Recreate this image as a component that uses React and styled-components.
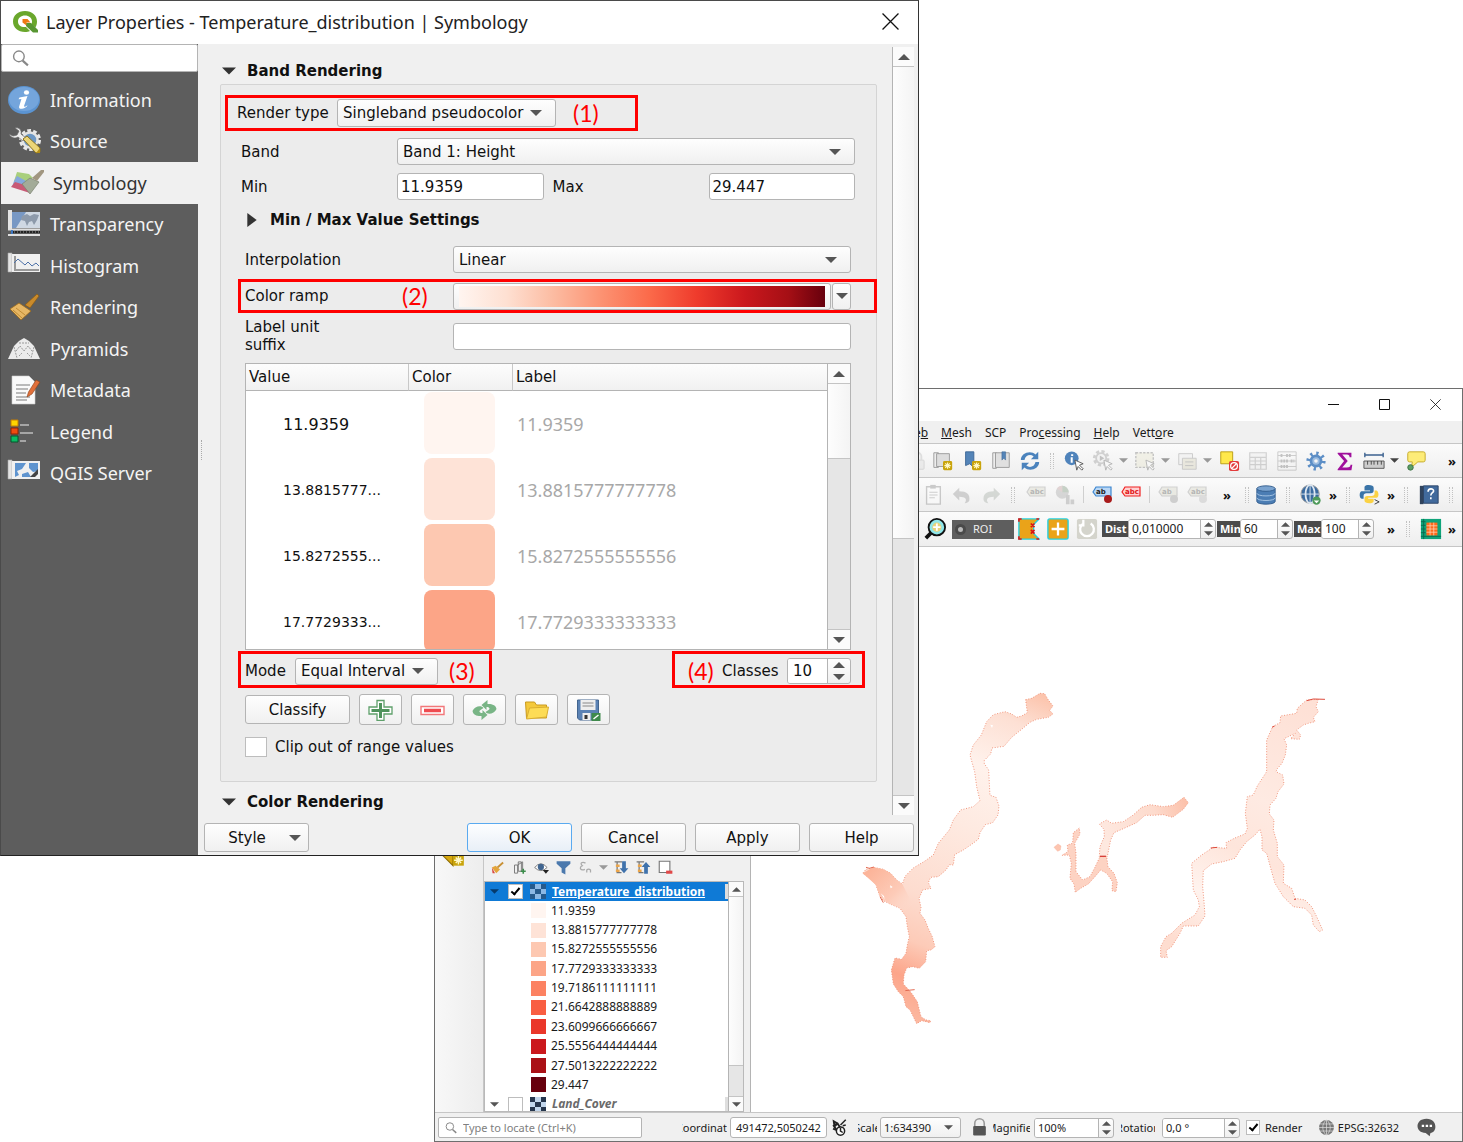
import React from "react";
import styled, { createGlobalStyle, css } from "styled-components";

const UI = '"Noto Sans", "Open Sans", sans-serif';
const FORM = '"DejaVu Sans", "Noto Sans", sans-serif';
const LINE = "#b4b4b4";
const RED = "#ff0000";

const Global = createGlobalStyle`
  *, *::before, *::after { box-sizing: border-box; }
  body { margin: 0; background: #fff; font-family: ${UI}; color: #1a1a1a; }
  button, input, select { font: inherit; color: inherit; margin: 0; }
  ul { list-style: none; margin: 0; padding: 0; }
  svg { display: block; flex: none; }
`;

const Desktop = styled.div`
  position: relative;
  min-height: 100vh;
  overflow: hidden;
`;

/* ---------- shared controls ---------- */

const face = css`
  background: linear-gradient(#fefefe, #f0f0f0);
  border: 1px solid ${LINE};
  border-radius: 3px;
`;

const PlainButton = styled.button`
  border: 0;
  padding: 0;
  background: none;
  display: flex;
  align-items: center;
  justify-content: center;
`;

const Triangle = ({ dir = "down", size = 12, color = "#555" }) => {
  const shape = {
    down: "M0 3h12L6 9z",
    up: "M0 9h12L6 3z",
    right: "M2 0v12l8-6z",
  }[dir];
  return (
    <svg width={size} height={size} viewBox="0 0 12 12" aria-hidden="true">
      <path d={shape} fill={color} />
    </svg>
  );
};

const SelectShell = styled.span`
  display: grid;
  grid-template-columns: 1fr auto;
  align-items: center;
  height: ${(p) => p.$h || 27}px;
  width: ${(p) => (p.$w ? `${p.$w}px` : "auto")};
  flex: ${(p) => (p.$w ? "none" : 1)};
  ${face}
  select {
    grid-area: 1 / 1 / 2 / 3;
    appearance: none;
    border: 0;
    background: none;
    width: 100%;
    height: 100%;
    padding: 0 0 0 ${(p) => p.$pad ?? 5}px;
  }
  svg {
    grid-area: 1 / 2 / 2 / 3;
    margin-right: ${(p) => p.$arrow ?? 13}px;
    pointer-events: none;
  }
`;

const Select = ({ id, value, size, ...rest }) => (
  <SelectShell {...rest}>
    <select id={id} defaultValue={value}>
      <option>{value}</option>
    </select>
    <Triangle size={size} />
  </SelectShell>
);

const TextInput = styled.input`
  flex: 1;
  min-width: 0;
  width: 100%;
  height: 27px;
  padding: 0 3px;
  background: #fff;
  border: 1px solid ${LINE};
  border-radius: 3px;
`;

const SpinShell = styled.span`
  display: flex;
  width: ${(p) => p.$w}px;
  height: ${(p) => p.$h || 20}px;
  overflow: hidden;
  ${face}
  input {
    flex: 1;
    min-width: 0;
    border: 0;
    border-right: 1px solid ${LINE};
    background: #fff;
    padding: 0 0 0 ${(p) => p.$pad || 3}px;
  }
`;

const SpinArrows = styled.span`
  display: flex;
  flex-direction: column;
  align-items: center;
  justify-content: center;
  width: ${(p) => p.$w || 14}px;
`;

const Spin = ({ id, value, arrows, size = 9, ...rest }) => (
  <SpinShell {...rest}>
    <input id={id} defaultValue={value} />
    <SpinArrows $w={arrows}>
      <Triangle dir="up" size={size} />
      <Triangle size={size} />
    </SpinArrows>
  </SpinShell>
);

const Bar = styled.div`
  display: flex;
  flex-direction: column;
  width: ${(p) => p.$w}px;
  background: #e6e6e6;
  border-left: 1px solid ${LINE};
  flex: none;
`;
const BarEnd = styled(PlainButton)`
  height: ${(p) => p.$h}px;
  flex: none;
  background: #fbfbfb;
  border-${(p) => (p.$end ? "top" : "bottom")}: 1px solid #c4c4c4;
`;
const Thumb = styled.div`
  flex: ${(p) => p.$grow} 1 0;
  background: linear-gradient(90deg, #fdfdfd, #f4f4f4);
  border-bottom: 1px solid #c4c4c4;
`;
const Rest = styled.div`
  flex: ${(p) => p.$grow} 1 0;
`;

const ScrollBar = ({ w, h, size, thumb, rest }) => (
  <Bar $w={w}>
    <BarEnd $h={h} aria-label="Scroll up"><Triangle dir="up" size={size} /></BarEnd>
    <Thumb $grow={thumb} />
    <Rest $grow={rest} />
    <BarEnd $h={h} $end aria-label="Scroll down"><Triangle size={size} /></BarEnd>
  </Bar>
);

/* ---------- layer properties dialog ---------- */

const Dialog = styled.section`
  position: absolute;
  left: 0;
  top: 0;
  width: 919px;
  display: flex;
  flex-direction: column;
  background: #f0f0f0;
  border: 1px solid #4a4a4a;
  border-right-color: #333;
  border-bottom-color: #222;
  font-family: ${FORM};
  font-size: 15px;
  color: #111;
`;

const DialogTitle = styled.header`
  display: flex;
  align-items: center;
  height: 43px;
  padding: 0 19px 2px 11px;
  gap: 7px;
  background: #fff;
  h1 {
    flex: 1;
    margin: 0;
    font: 400 18px/24px ${UI};
    color: #222;
  }
`;

const DialogMain = styled.div`
  display: flex;
  height: 811px;
`;

const Sidebar = styled.nav`
  width: 197px;
  flex: none;
  background: #5d5d5d;
`;

const SideSearch = styled.label`
  display: flex;
  align-items: center;
  height: 28px;
  padding-left: 10px;
  background: #fff;
  border: 1px solid ${LINE};
  border-radius: 2px;
  input {
    flex: 1;
    min-width: 0;
    border: 0;
    outline: 0;
    background: none;
  }
`;

const SideList = styled.ul`
  display: grid;
  grid-auto-rows: 1fr;
  height: 415px;
  margin-top: 7px;
`;

const SideItem = styled.a`
  display: flex;
  align-items: center;
  gap: 9px;
  height: 100%;
  padding-left: ${(p) => (p.$active ? 9 : 6)}px;
  font: 400 18px/24px ${UI};
  text-decoration: none;
  color: ${(p) => (p.$active ? "#333" : "#f4f4f4")};
  background: ${(p) => (p.$active ? "#f0f0f0" : "none")};
`;

const Splitter = styled.div`
  width: 6px;
  flex: none;
  display: flex;
  align-items: center;
  justify-content: center;
  &::after {
    content: "";
    height: 20px;
    border-left: 1px dotted #aaa;
  }
`;

const Content = styled.div`
  flex: 1;
  min-width: 0;
  display: flex;
  flex-direction: column;
`;

const ScrollArea = styled.div`
  display: flex;
  height: 771px;
  padding: 3px 4px 0 0;
`;

const Form = styled.div`
  flex: 1;
  min-width: 0;
  padding: 11px 15px 0 16px;
`;

const SectionTitle = styled.h2`
  display: flex;
  align-items: center;
  gap: 11px;
  height: 26px;
  margin: ${(p) => p.$top || 0}px 0 0 ${(p) => p.$left || 2}px;
  font-size: 15px;
  line-height: 20px;
  font-weight: 700;
`;

const Group = styled.div`
  height: 698px;
  border: 1px solid #d4d4d4;
  border-radius: 2px;
  background: #ececec;
`;

const Row = styled.div`
  display: flex;
  align-items: center;
  margin: ${(p) => p.$top || 8}px ${(p) => p.$right ?? 25}px 0 ${(p) => p.$left ?? 24}px;
  gap: ${(p) => p.$gap || 0}px;
`;

const PairRow = styled.div`
  display: grid;
  grid-template-columns: 156px 1fr 165px 1fr;
  align-items: center;
  margin: 8px 21px 0 20px;
  label + input + label { padding-left: 9px; }
`;

const Label = styled.label`
  width: ${(p) => p.$w}px;
  flex: none;
  line-height: 18px;
`;
const Narrow = styled.span`
  display: block;
  width: 90px;
`;

const Callout = styled.div`
  display: flex;
  align-items: center;
  height: ${(p) => p.$h}px;
  width: ${(p) => (p.$w ? `${p.$w}px` : "auto")};
  padding: ${(p) => p.$pt || 0}px ${(p) => p.$pr || 0}px 0 ${(p) => p.$pl}px;
  margin: ${(p) => p.$m || "0"};
  border: 3px solid ${RED};
`;

const Mark = styled.span`
  width: ${(p) => p.$w || 34}px;
  margin-left: ${(p) => p.$left || 0}px;
  flex: none;
  font: 400 23px/26px Lato, ${UI};
  color: ${RED};
`;

const RampButton = styled.button`
  flex: 1;
  height: 27px;
  padding: 2px 5px;
  ${face}
`;
const Ramp = styled.span`
  display: block;
  height: 100%;
  background: linear-gradient(90deg, #fff5f0, #fee0d2 13%, #fcbba1 26%, #fc9272 39%, #fb6a4a 52%, #ef3b2c 65%, #cb181d 78%, #a50f15 90%, #67000d);
`;
const DropButton = styled(PlainButton)`
  width: 19px;
  height: 27px;
  margin-left: 1px;
  ${face}
`;

const TableFrame = styled.div`
  display: flex;
  height: 287px;
  margin: 9px 25px 0 24px;
  overflow: hidden;
  background: #fff;
  border: 1px solid ${LINE};
`;
const TableView = styled.div`
  flex: 1;
  min-width: 0;
  overflow: hidden;
`;
const ClassTable = styled.table`
  width: 100%;
  table-layout: fixed;
  border-collapse: separate;
  border-spacing: 0;
  th {
    height: 27px;
    padding: 0 3px;
    text-align: left;
    font-weight: 400;
    background: linear-gradient(#fdfdfd, #f1f1f1);
    border-bottom: 1px solid ${LINE};
  }
  th + th { border-left: 1px solid #c8c8c8; }
  td { height: 66px; padding: 0; }
`;
const ValueCell = styled.td`
  && { padding-left: 37px; }
  font-size: ${(p) => (p.$lead ? 16 : 14)}px;
`;
const LabelCell = styled.td`
  && { padding-left: 5px; }
  font: 400 18px/24px ${UI};
  color: #a8a8a8;
`;
const Swatch = styled.span`
  display: block;
  width: 71px;
  height: 62px;
  margin: 0 0 2px 16px;
  border-radius: 8px;
  background: ${(p) => p.$c};
`;

const ModeRow = styled.div`
  display: flex;
  justify-content: space-between;
  margin: 1px 11px 0 17px;
`;

const PushButton = styled.button`
  width: 105px;
  height: 29px;
  padding: 0;
  ${face}
  ${(p) => p.$primary && "border-color: #5aaaf0; background: linear-gradient(#fdfeff, #e8eff7);"}
`;
const StyleButton = styled(PushButton)`
  display: grid;
  grid-template-columns: 84px 1fr;
  align-items: center;
`;
const IconButton = styled(PlainButton)`
  width: 43px;
  height: 31px;
  ${face}
`;

const CheckBox = styled.input`
  appearance: none;
  width: ${(p) => p.$w}px;
  height: ${(p) => p.$h}px;
  flex: none;
  background: #fff;
  border: 1px solid #bdbdbd;
  display: grid;
  place-items: center;
  &:checked::after {
    content: "";
    width: 5px;
    height: 9px;
    margin-bottom: 2px;
    border: solid #000;
    border-width: 0 2px 2px 0;
    transform: rotate(40deg);
  }
`;

const Footer = styled.footer`
  display: flex;
  align-items: flex-end;
  gap: 9px;
  height: 40px;
  padding: 0 4px 3px 0;
`;
const Fill = styled.span`
  flex: 1;
`;

/* ---------- icons: dialog ---------- */

const Logo = () => (
  <svg width="27" height="24" viewBox="0 0 27 24" aria-hidden="true">
    <path d="M13 1C6 1 1 5.500 1 11.500S6 22 13 22c2 0 3.500-.3 5-1l-4-4c-5 .6-8-2-8-5.500C6 8 9 5.500 13 5.500S20 8 20 11.500c0 1-.2 2-.7 2.700l4 3.300c1.200-1.700 1.700-3.800 1.700-6C25 5.500 20 1 13 1z" fill="#6aa72c" />
    <path d="M14 13h5l7 7v2.500h-5L14 16z" fill="#589632" />
    <path d="M10.500 9h5l3 3.500h-4v3l-4-3z" fill="#ee7913" />
  </svg>
);

const Magnifier = ({ size = 17, color = "#888" }) => (
  <svg width={size} height={size} viewBox="0 0 16 16" fill="none" stroke={color} strokeWidth="1.300" aria-hidden="true">
    <circle cx="6.500" cy="6" r="5" />
    <path d="M10 10l5 4.500" strokeWidth="2" />
  </svg>
);

const Close = ({ size = 16 }) => (
  <svg width={size} height={size} viewBox="0 0 16 16" stroke="#111" strokeWidth="1.200" aria-hidden="true">
    <path d="M0.500 0.500l15 15M15.500 0.500l-15 15" />
  </svg>
);

const scrollMap = (
  <>
    <path d="M1 2h4v19H1z" fill="#e4e4e4" stroke="#aaa" strokeWidth=".6" />
    <path d="M5 3h28v18H5z" fill="#f0f0f0" />
  </>
);

const sideArt = {
  Information: (
    <>
      <ellipse cx="17" cy="15" rx="16" ry="14" fill="#5b94d2" />
      <ellipse cx="17" cy="14" rx="15" ry="12" fill="#74a5dc" />
      <ellipse cx="19.500" cy="7.500" rx="2.600" ry="2.200" fill="#fff" />
      <path d="M12.500 12.500l8-1.500-3.500 10c0 1.500 2 .4 3.500-.8-1 3-8.500 5.500-8.500 1.800l2.400-8-2.900.3z" fill="#fff" />
    </>
  ),
  Source: (
    <>
      <circle cx="23" cy="14" r="9" fill="none" stroke="#e8e8e8" strokeWidth="4" strokeDasharray="3.500 2.150" />
      <circle cx="23" cy="14" r="7.500" fill="#6d97c4" stroke="#e4e4e4" strokeWidth="2.500" />
      <path d="M2 8c2 4 6 5 9 3l5 4 3-3-5-4c1-4-2-7-6-6l4 3-2 4-4 1z" fill="#eee" stroke="#666" strokeWidth=".7" />
      <path d="M16 13l4-3 13 12v4l-4 1z" fill="#ecd577" stroke="#8c7420" />
      <path d="M29 27l4-5v5z" fill="#b28d18" />
    </>
  ),
  Symbology: (
    <>
      <path d="M7 4l12 2 4 4-9 4-10-1z" fill="#a9cf7c" />
      <path d="M4 13l3-5 9 5-2 5-12 1z" fill="#86a8dc" />
      <path d="M1 19l4-5 10 3 5 8z" fill="#c95a76" />
      <path d="M12 16l8-6 9 4-9 12z" fill="#a3ab98" stroke="#7a8270" strokeWidth=".7" />
      <path d="M22 10l9-8h3v2l-7 9z" fill="#a19680" />
    </>
  ),
  Transparency: (
    <>
      <path d="M1 1h4v19H1z" fill="#e4e4e4" />
      <path d="M5 3h28v16H5z" fill="#cfd8e3" />
      <path d="M5 3h14L9 19H5z" fill="#6288bc" opacity=".8" />
      <path d="M15 7l5-2 3 2 4-2 5 1-2 5-3 5-2-4-3 1-2 4-2-5-4-1z" fill="#8d9aab" />
      <path d="M1 20.500h32M1 26h32" stroke="#e0e0e0" strokeWidth="1.800" />
      <path d="M5 23h28" stroke="#222" strokeDasharray="2 1" strokeWidth="2" />
      <path d="M4 21h2v4H4z" fill="#3d76c0" />
    </>
  ),
  Histogram: (
    <>
      {scrollMap}
      <path d="M8 5v14h24" fill="none" stroke="#999" strokeWidth="2" />
      <path d="M7 12l4-4 7 6 3-3 4 4 4-3 3 3" fill="none" stroke="#4d71a8" />
    </>
  ),
  Rendering: (
    <>
      <path d="M18 13L30 2l2 2-9 12z" fill="#c98a2b" stroke="#8a5a12" strokeWidth=".7" />
      <path d="M3 17l9-6 12 8-10 9z" fill="#e7b765" stroke="#9a6a1c" strokeWidth=".8" />
      <path d="M6 18l9 8M9 16l9 7" stroke="#c08c36" />
    </>
  ),
  Pyramids: (
    <>
      <path d="M7 12l5-5 5-3 5 3 5 5 6 13H1z" fill="#ebebeb" />
      <path d="M7 13l3 11M27 13l-3 11M12 9h10M9 17l4-5 4 5 4-5 4 5M12 22l3-3M20 19l3 3" fill="none" stroke="#999" strokeDasharray="2 1" />
    </>
  ),
  Metadata: (
    <>
      <path d="M5 1h17l6 6v22H5z" fill="#fafafa" stroke="#ccc" strokeWidth=".6" />
      <path d="M9 10h14M9 14h12M9 18h10M9 22h14M9 25h11" stroke="#a5a5a5" strokeWidth="1.300" />
      <path d="M20 22l1.500-5L29 5l4 2-8 12z" fill="#e2703a" stroke="#8a3f16" strokeWidth=".6" />
    </>
  ),
  Legend: (
    <>
      <path d="M4 3h7v6H4z" fill="#ffd500" stroke="#c87f00" />
      <path d="M4 11h7v6H4z" fill="#f04a10" stroke="#8c2300" />
      <path d="M4 19h7v6H4z" fill="#0bbb63" stroke="#04562c" />
      <path d="M13 8h9M13 16h13M13 24h6" stroke="#a5a5a5" strokeWidth="2" />
    </>
  ),
  "QGIS Server": (
    <>
      {scrollMap}
      <path d="M8 5h11l-4 6-5 2 2 4-4 2zM22 5h9v8l-5 1-4-4zM15 16l6-2 3 5h-9z" fill="#5f94cf" />
      <path d="M31 11l-8 8h5l3-3z" fill="#444" />
    </>
  ),
};

const SideIcon = ({ name }) => (
  <svg width="34" height="30" viewBox="0 0 34 30" aria-hidden="true">{sideArt[name]}</svg>
);

const rampTools = [
  ["Add value", (
    <>
      <path d="M8.500.5h7v6.500h8v7h-8v6.500h-7V14h-8V7h8z" fill="#fff" stroke="#5fa06b" strokeWidth="1.300" />
      <path d="M12 3v15M3 10.500h18" stroke="#4f935c" strokeWidth="3" />
    </>
  )],
  ["Remove value", (
    <>
      <path d="M.5 6.500h23v8H.5z" fill="#fff" stroke="#f2777a" strokeWidth="1.400" />
      <path d="M3.500 10.500h17" stroke="#ef4b50" strokeWidth="3.500" />
    </>
  )],
  ["Invert", (
    <>
      <path d="M11 8c-2-3-9-2-11 3 1 5 6 5 9 5v4l6-5-5-5v3c-3 0-4-2-2-3z" fill="#79b586" />
      <path d="M13 12c2 3 9 2 11-3-1-5-6-5-9-5V0l-6 5 5 5V7c3 0 4 2 2 3z" fill="#79b586" />
    </>
  )],
  ["Load", (
    <>
      <path d="M1 2h9l2 3h10v13H2z" fill="#f4c93c" stroke="#c99a1e" />
      <path d="M5 8l19-1-2 10-20 2z" fill="#fddc56" stroke="#d9ae32" />
    </>
  )],
  ["Save", (
    <>
      <path d="M1 0h21v20H3l-2-2z" fill="#5b82b4" stroke="#43658f" />
      <path d="M4 0h15v10H4z" fill="#eee" />
      <path d="M6 3h11M6 6h11" stroke="#888" />
      <path d="M6 13h8v7H6z" fill="#eee" />
      <path d="M8 15h3v4H8z" fill="#333" />
      <path d="M15 13h9v8h-9z" fill="#3f8a4c" />
      <path d="M17 19l5-4" stroke="#fff" strokeWidth="1.500" />
    </>
  )],
];

const classes = [
  ["11.9359", "#fff5f0", "11.9359"],
  ["13.8815777777778", "#fee3d7", "13.8815777..."],
  ["15.8272555555556", "#fdc8b1", "15.8272555..."],
  ["17.7729333333333", "#fca587", "17.7729333..."],
  ["19.7186111111111", "#fc8262"],
  ["21.6642888888889", "#f95e42"],
  ["23.6099666666667", "#ea372a"],
  ["25.5556444444444", "#cb181d"],
  ["27.5013222222222", "#aa1016"],
  ["29.447", "#67000d"],
];

function LayerProperties() {
  return (
    <Dialog aria-label="Layer Properties">
      <DialogTitle>
        <Logo />
        <h1>Layer Properties - Temperature_distribution | Symbology</h1>
        <PlainButton aria-label="Close"><Close size={17} /></PlainButton>
      </DialogTitle>
      <DialogMain>
        <Sidebar>
          <SideSearch>
            <Magnifier />
            <input type="text" aria-label="Search" />
          </SideSearch>
          <SideList>
            {Object.keys(sideArt).map((name) => (
              <li key={name}>
                <SideItem href="#" $active={name === "Symbology"}>
                  <SideIcon name={name} />
                  {name}
                </SideItem>
              </li>
            ))}
          </SideList>
        </Sidebar>
        <Splitter />
        <Content>
          <ScrollArea>
            <Form>
              <SectionTitle><Triangle size={14} color="#333" />Band Rendering</SectionTitle>
              <Group>
                <Callout $h={36} $w={413} $pl={9} $m="10px 0 0 4px">
                  <Label $w={100} htmlFor="render">Render type</Label>
                  <Select id="render" value="Singleband pseudocolor" $w={219} $h={28} />
                  <Mark $left={17}>(1)</Mark>
                </Callout>
                <Row $top={7} $left={20} $right={21}>
                  <Label $w={156} htmlFor="band">Band</Label>
                  <Select id="band" value="Band 1: Height" />
                </Row>
                <PairRow>
                  <Label htmlFor="min">Min</Label>
                  <TextInput id="min" defaultValue="11.9359" />
                  <Label htmlFor="max">Max</Label>
                  <TextInput id="max" defaultValue="29.447" />
                </PairRow>
                <SectionTitle $top={7} $left={24}>
                  <Triangle dir="right" size={14} color="#333" />
                  Min / Max Value Settings
                </SectionTitle>
                <Row $top={13}>
                  <Label $w={208} htmlFor="interp">Interpolation</Label>
                  <Select id="interp" value="Linear" />
                </Row>
                <Callout $h={34} $pl={4} $pr={23} $m="6px -1px 0 17px">
                  <Label as="span" $w={157}>Color ramp</Label>
                  <Mark $w={51}>(2)</Mark>
                  <RampButton aria-label="Color ramp"><Ramp /></RampButton>
                  <DropButton aria-label="Choose color ramp"><Triangle /></DropButton>
                </Callout>
                <Row $top={5}>
                  <Label $w={208} htmlFor="suffix"><Narrow>Label unit suffix</Narrow></Label>
                  <TextInput id="suffix" />
                </Row>
                <TableFrame>
                  <TableView>
                    <ClassTable>
                      <colgroup>
                        <col width="162" />
                        <col width="104" />
                        <col />
                      </colgroup>
                      <thead>
                        <tr><th>Value</th><th>Color</th><th>Label</th></tr>
                      </thead>
                      <tbody>
                        {classes.slice(0, 4).map(([label, color, short], i) => (
                          <tr key={label}>
                            <ValueCell $lead={i === 0}>{short}</ValueCell>
                            <td><Swatch $c={color} /></td>
                            <LabelCell>{label}</LabelCell>
                          </tr>
                        ))}
                      </tbody>
                    </ClassTable>
                  </TableView>
                  <ScrollBar w={23} h={20} size={12} thumb={75} rest={171} />
                </TableFrame>
                <ModeRow>
                  <Callout $h={37} $w={254} $pl={4} $pt={3}>
                    <Label $w={50} htmlFor="mode">Mode</Label>
                    <Select id="mode" value="Equal Interval" $w={143} />
                    <Mark $left={11}>(3)</Mark>
                  </Callout>
                  <Callout $h={37} $w={193} $pl={13} $pt={3}>
                    <Mark>(4)</Mark>
                    <Label $w={65} htmlFor="classes">Classes</Label>
                    <Spin id="classes" value="10" $w={64} $h={26} $pad={5} arrows={22} size={12} />
                  </Callout>
                </ModeRow>
                <Row $top={6} $gap={9}>
                  <PushButton>Classify</PushButton>
                  {rampTools.map(([name, art]) => (
                    <IconButton key={name} aria-label={name}>
                      <svg width="25" height="22" viewBox="-0.5 -1 25 22" aria-hidden="true">{art}</svg>
                    </IconButton>
                  ))}
                </Row>
                <Row $top={12} $gap={8}>
                  <CheckBox type="checkbox" id="clip" $w={22} $h={20} />
                  <label htmlFor="clip">Clip out of range values</label>
                </Row>
              </Group>
              <SectionTitle $top={7}><Triangle size={14} color="#333" />Color Rendering</SectionTitle>
            </Form>
            <ScrollBar w={22} h={20} size={12} thumb={472} rest={256} />
          </ScrollArea>
          <Footer>
            <StyleButton><span>Style</span><Triangle /></StyleButton>
            <Fill />
            <PushButton $primary>OK</PushButton>
            <PushButton>Cancel</PushButton>
            <PushButton>Apply</PushButton>
            <PushButton>Help</PushButton>
          </Footer>
        </Content>
      </DialogMain>
    </Dialog>
  );
}

/* ---------- main application window ---------- */

const AppWindow = styled.section`
  position: absolute;
  left: 434px;
  top: 388px;
  right: 0;
  bottom: 0;
  display: flex;
  flex-direction: column;
  background: #f0f0f0;
  border: 1px solid #6e6e6e;
  font-size: 12px;
  line-height: 18px;
`;

const Caption = styled.header`
  display: flex;
  justify-content: flex-end;
  height: 32px;
  padding: 0 1px 2px 0;
  background: #fff;
  button { width: 51px; }
`;

const MenuBar = styled.nav`
  display: flex;
  align-items: center;
  gap: 13px;
  height: 22px;
  padding: 2px 0 0 468px;
  a { color: inherit; text-decoration: none; }
`;

const ToolBar = styled.div`
  display: flex;
  align-items: center;
  height: ${(p) => p.$h || 34}px;
  padding-left: ${(p) => p.$pl}px;
  background: linear-gradient(#fbfbfb, #eeeeee);
  border-top: 1px solid #c6c6c6;
`;

const Tool = styled(PlainButton)`
  width: ${(p) => p.$w || 29}px;
  height: 28px;
  flex: none;
  opacity: ${(p) => (p.$off ? 0.4 : 1)};
`;

const Slot = styled.span`
  width: ${(p) => p.$w}px;
  flex: none;
  display: flex;
  align-items: center;
  justify-content: center;
`;
const Grip = styled.span`
  width: 4px;
  height: 16px;
  border: dotted #c2c2c2;
  border-width: 0 1px;
`;
const Rule = styled.span`
  width: 1px;
  height: 17px;
  background: #cfcfcf;
`;
const More = styled(PlainButton)`
  width: ${(p) => p.$w}px;
  flex: none;
  font: 700 13px/14px ${UI};
  color: #111;
`;

const Roi = styled.label`
  display: flex;
  align-items: center;
  gap: 7px;
  width: 62px;
  height: 19px;
  margin: 0 4px;
  padding-left: 3px;
  background: #5e5e5e;
  color: #eee;
  font-size: 11px;
  input {
    appearance: none;
    width: 11px;
    height: 11px;
    margin: 0;
    border-radius: 50%;
    background: #b9b9b9;
    border: 3px solid #4a4a4a;
  }
`;
const Tag = styled.label`
  height: 16px;
  width: ${(p) => p.$w}px;
  margin-left: 1px;
  padding-left: 3px;
  overflow: hidden;
  flex: none;
  background: #4b4b4b;
  color: #fff;
  font: 700 11px/16px ${UI};
`;

const Body = styled.div`
  display: flex;
  flex: 1;
  min-height: 0;
  border-top: 1px solid #c6c6c6;
`;
const SideTools = styled.div`
  display: flex;
  flex-direction: column;
  justify-content: flex-end;
  width: 48px;
  padding: 0 0 241px 3px;
  background: linear-gradient(90deg, #f8f8f8, #ededed);
`;
const LayerPanel = styled.div`
  display: flex;
  flex-direction: column;
  justify-content: flex-end;
  width: 261px;
  margin-right: 6px;
  border-left: 1px solid #c6c6c6;
`;
const LayerTools = styled.div`
  display: flex;
  align-items: center;
  height: 28px;
  padding-left: 2px;
`;
const Tree = styled.div`
  display: flex;
  height: 231px;
  border: 1px solid #b9b9b9;
  background: #fff;
`;
const TreeRows = styled.ul`
  flex: 1;
  height: 229px;
  overflow: hidden;
  display: grid;
  grid-template-rows: 19px;
  grid-auto-rows: calc(213px / 11);
`;
const LayerRow = styled.li`
  display: flex;
  align-items: center;
  padding-left: 5px;
  font-weight: 700;
  background: ${(p) => (p.$active ? "#0f7ad6" : "none")};
  color: ${(p) => (p.$active ? "#fff" : "#6a6a6a")};
  font-style: ${(p) => (p.$active ? "normal" : "italic")};
  label { flex: 1; text-decoration: ${(p) => (p.$active ? "underline" : "none")}; margin-left: 6px; white-space: nowrap; }
  input { margin: 0 7px 0 9px; }
  &::after { content: ""; width: 3px; height: 15px; background: #dedede; }
`;
const ClassRow = styled.li`
  display: flex;
  align-items: center;
  gap: 5px;
  padding-left: 46px;
  &::before {
    content: "";
    width: 15px;
    height: 15px;
    background: ${(p) => p.$c};
  }
`;
const MapView = styled.div`
  flex: 1;
  min-width: 0;
  overflow: hidden;
  background: #fff;
  border-left: 1px solid ${LINE};
`;

const StatusBar = styled.footer`
  display: flex;
  align-items: center;
  height: 29px;
  padding: 1px 4px 0 3px;
  border-top: 1px solid #c6c6c6;
  font-size: 11px;
`;
const Locate = styled.label`
  display: flex;
  align-items: center;
  gap: 6px;
  width: 204px;
  height: 21px;
  padding-left: 6px;
  background: #fff;
  border: 1px solid ${LINE};
  border-radius: 2px;
  input { flex: 1; min-width: 0; border: 0; padding: 0; background: none; }
  input::placeholder { color: #808080; opacity: 1; }
`;
const Clip = styled.label`
  display: flex;
  justify-content: center;
  width: ${(p) => p.$w}px;
  margin-left: ${(p) => p.$left}px;
  overflow: hidden;
  flex: none;
`;
const StatusInput = styled(TextInput)`
  flex: none;
  width: 97px;
  height: 21px;
  padding: 0 5px;
  margin-left: 3px;
`;
const Gap = styled.span`
  width: ${(p) => p.$w}px;
  flex: none;
`;

/* ---------- icons: main window ---------- */

const Icon = ({ children, size = 24, ...rest }) => (
  <svg width={size} height={size} viewBox="0 0 24 24" fill="none" aria-hidden="true" {...rest}>{children}</svg>
);

const star = (
  <>
    <rect x="12" y="12" width="10" height="10" rx="1.500" fill="#c9a40c" />
    <path d="M17 13.500v7M13.500 17h7M14.500 14.500l5 5M19.500 14.500l-5 5" stroke="#fff8c8" strokeWidth="1.200" />
  </>
);
const pointer = <path d="M13 11l9 4-4 1.500 4 4-1.500 1.500-4-4-1.500 4z" fill="#fff" stroke="#555" />;

const art = {
  lock: <><rect x="9" y="11" width="14" height="10" rx="1" fill="#ddd" stroke="#aaa" /><path d="M12 11V7a4 4 0 018 0v4" stroke="#bbb" strokeWidth="2" /></>,
  newProject: <><path d="M2 3h5v16H2z" fill="#eee" stroke="#999" /><path d="M5 4h14v14H5z" fill="#ddd" stroke="#999" />{star}</>,
  newBookmark: <><path d="M5 2h9v17l-4.500-4L5 17z" fill="#5484b8" stroke="#3e6896" />{star}</>,
  bookmarks: <><path d="M3 3h4v17H3z" fill="#eee" stroke="#999" /><path d="M6 3h15v16H6z" fill="#e0e0e0" stroke="#999" /><path d="M13 2h4v9l-2-2-2 2z" fill="#5484b8" stroke="#3e6896" strokeWidth=".6" /></>,
  refresh: <><path d="M2 11C2 3 13 0 18 5l3-3v8h-8l3-3c-4-3-9-1-10 4z" fill="#4b83bd" /><path d="M22 13c0 8-11 11-16 6l-3 3v-8h8l-3 3c4 3 9 1 10-4z" fill="#4b83bd" /></>,
  identify: <><circle cx="9.500" cy="9" r="7.500" fill="#4f83bb" /><path d="M10 4.500v2M9.500 8v6" stroke="#fff" strokeWidth="2.200" />{pointer}</>,
  action: <><circle cx="10" cy="9" r="7.500" stroke="#999" strokeWidth="3" strokeDasharray="3.500 2.390" /><circle cx="10" cy="9" r="5.500" fill="#eee" stroke="#999" strokeWidth="2" /><path d="M8.500 6v6l5-3z" fill="#777" />{pointer}</>,
  select: <><path d="M2 3h19v16H2z" fill="#e8e6cf" stroke="#777" strokeWidth="1.500" strokeDasharray="2.500 1.500" />{pointer}</>,
  form: <><path d="M3 4h15v12H3z" fill="#eee" stroke="#888" /><path d="M7 9h15v12H7z" fill="#d9d5bd" stroke="#888" /><path d="M10 13h9M10 17h9" stroke="#777" /></>,
  deselect: <><path d="M3 2h13v13H3z" fill="#ffe84c" stroke="#b99b10" /><rect x="12" y="12" width="11" height="11" rx="2" fill="#e33b3b" /><circle cx="17.500" cy="17.500" r="3.700" stroke="#fff" strokeWidth="1.400" /><path d="M15 20l5-5" stroke="#fff" strokeWidth="1.400" /></>,
  table: <path d="M3 3h18v18H3zM3 8h18M9 8v13M3 12h18M3 16h18M15 8v13" fill="#eee" stroke="#999" strokeWidth="1.300" />,
  abacus: <><path d="M2 2h20v20H2zM2 6h20M2 12h20M2 18h20" stroke="#888" /><path d="M5 6h3M11 6h6M5 12h8M16 12h4M5 18h9" stroke="#777" strokeWidth="3.500" strokeDasharray="2 1" /></>,
  gear: <><circle cx="12" cy="12" r="8.500" stroke="#5c8ec6" strokeWidth="4" strokeDasharray="2.500 4.176" /><circle cx="12" cy="12" r="5.500" fill="#9dbde0" stroke="#5c8ec6" strokeWidth="3" /><circle cx="12" cy="12" r="2" fill="#f6f6f6" /></>,
  sigma: <path d="M4 3h15v5h-2c0-2-1-3-3-3H9l6 7-6 7h5c3 0 4-1 4-3h2l-1 6H4v-1l7-9-7-8z" fill="#a0109c" />,
  measure: <><path d="M2 5.500h20M2 3v5M22 3v5" stroke="#3c6290" strokeWidth="1.500" /><path d="M1 12h22v8H1z" fill="#ccc" stroke="#555" /><path d="M5 12v4M9 12v4M12 12v4M16 12v4M20 12v4" stroke="#444" /></>,
  tip: <><path d="M5 2h15q2 0 2 2v7q0 2-2 2h-6l-7 6 1-6H5q-2 0-2-2V4q0-2 2-2z" fill="#fdec78" stroke="#c3a828" /><circle cx="6" cy="19" r="3" fill="#5c9f66" stroke="#3b6e44" /></>,
  paste: <><path d="M5 3h15v19H5z" fill="#fff" stroke="#888" strokeWidth="1.500" /><path d="M9 1h6v4H9z" fill="#888" /><path d="M8 9h9M8 12h9M8 15h6" stroke="#888" /></>,
  undo: <path d="M9 4v4c8 0 12 3 11 10-1 2-3 3-5 3 3-4 1-7-6-7v4l-7-7z" fill="#999" />,
  redo: <path d="M15 4v4C7 8 3 11 4 18c1 2 3 3 5 3-3-4-1-7 6-7v4l7-7z" fill="#a5ada5" />,
  diagram: <><circle cx="9" cy="9" r="7" fill="#a9a9a9" /><path d="M9 9V2a7 7 0 017 7z" fill="#7f9a7f" /><path d="M9 9L3 5a7 7 0 016-3z" fill="#c4a0a0" /><path d="M13 12h4v10h-4zM18 17h4v5h-4z" fill="#999" /></>,
  database: <><path d="M2 5v14c0 4 20 4 20 0V5" fill="#4b7db4" stroke="#315c8c" /><ellipse cx="12" cy="5" rx="10" ry="3" fill="#7ba4d0" stroke="#315c8c" /><path d="M2 10c0 4 20 4 20 0M2 15c0 4 20 4 20 0" stroke="#a9c6e4" /></>,
  globe: <><circle cx="11" cy="11" r="10" fill="#3b6ba0" stroke="#999" /><path d="M11 1v20M1 11h20" stroke="#dfe8f1" /><ellipse cx="11" cy="11" rx="5" ry="10" stroke="#dfe8f1" strokeWidth="2" /><circle cx="18" cy="18" r="4.500" fill="#4e9a5a" /><path d="M15 18h6l-3 3z" fill="#fff" /></>,
  python: <><path d="M10.500 1C6 1 6 3 6 4v3h6v1H3c-3 0-3 8 0 8h2v-3c0-2 1-3 3-3h5c2 0 3-1 3-3V4c0-2-2-3-5.500-3z" fill="#3a74a8" /><path d="M11.500 21c4.500 0 4.500-2 4.500-3v-2h-6v-1h9c3 0 3-7 0-8h-2v3c0 2-1 3-3 3H9c-2 0-3 1-3 3v2c0 2 2 3 5.500 3z" fill="#fbd243" /><path d="M17 17l5 2.500-5 2.500" stroke="#333" /></>,
  help: <><path d="M2 2h4v20H2z" fill="#30435c" /><path d="M6 2h16v19H6z" fill="#416a9c" stroke="#2a4365" /><path d="M11 8.500c0-4 6-4 6-1 0 2-3 2-3 5M14 14.500v2" stroke="#fff" strokeWidth="1.800" /></>,
  zoomRoi: <><path d="M2 22l6-6" stroke="#111" strokeWidth="4" /><circle cx="14" cy="10" r="9" fill="#8fe6ea" stroke="#111" strokeWidth="2" /><circle cx="14" cy="10" r="5" fill="#e8d27a" /><path d="M14 6v8M10 10h8" stroke="#fff" strokeWidth="2" /></>,
  roiShape: <><path d="M1 1h22l-6 6v10l6 6H1z" fill="#eaa319" stroke="#25cfe0" strokeWidth="1.500" /><path d="M1 4V1h3M20 1h3M1 20v3h3M20 23h3M14 6l4 4M18 6l-4 4M14 13l4 4M18 13l-4 4" stroke="#e01010" strokeWidth="1.700" /></>,
  roiPlus: <><rect x="1" y="1" width="22" height="22" rx="2" fill="#eaa319" stroke="#25cfe0" strokeWidth="1.500" /><path d="M12 5v14M5 12h14" stroke="#fff" strokeWidth="2.500" /></>,
  roiRedo: <><rect x="1" y="1" width="22" height="22" rx="2" fill="#d4d4cc" /><path d="M8 6a7.500 7.500 0 108 0M8 2v6H3" stroke="#fff" strokeWidth="2.500" /></>,
  raster: <><path d="M1 1h22v22H1z" fill="#10a47a" /><path d="M1 4h5M1 8h5M1 12h5M1 16h5M1 20h22M4 1v22" stroke="#0a6b50" /><path d="M7 5h12v14H7z" fill="#ff6a1c" /><path d="M7 8.500h12M7 12h12M7 15.500h12M11 5v14M15 5v14" stroke="#ffd9bd" strokeWidth=".8" /></>,
};

const LabelTag = ({ fg, line, bg, text = "abc", dot, faded }) => (
  <Tool $off={faded} aria-label={`Label ${text}`}>
    <svg width="22" height="22" viewBox="0 0 22 22" aria-hidden="true">
      <path d="M2 8l3-5h15v9H5z" fill={bg} stroke={line} strokeWidth="1.200" />
      <text x="5" y="10" fontSize="7" fontWeight="700" fontFamily="DejaVu Sans, sans-serif" fill={fg}>{text}</text>
      {dot && <circle cx="17" cy="15" r="4" fill={dot} />}
    </svg>
  </Tool>
);

const T = ({ name, off, w }) => (
  <Tool $off={off} $w={w} aria-label={name}><Icon size={22}>{art[name]}</Icon></Tool>
);
const Dots = ({ w }) => <Slot $w={w}><Grip /></Slot>;
const Drop = ({ faded }) => <Slot $w={13}><Triangle size={9} color={faded ? "#999" : "#444"} /></Slot>;

const menus = [["We", "b", ""], ["", "M", "esh"], ["SCP", "", ""], ["Pro", "c", "essing"], ["", "H", "elp"], ["Vett", "o", "re"]];

const layerIcons = [
  <><path d="M3 12l6-3 7 6-6 6z" fill="#e3a53a" /><path d="M3 12l5 9H4z" fill="#d9473f" /><path d="M12 12l9-8" stroke="#c89035" strokeWidth="3" /></>,
  <><path d="M4 8h5v13H4zM10 3h5v15h-5z" stroke="#777" strokeWidth="1.500" /><path d="M9 8l8-5v14" stroke="#777" strokeWidth="1.500" /><path d="M18 14v8M14 18h8" stroke="#3a8c4a" strokeWidth="2.500" /></>,
  <><path d="M1 12q10-12 20 0-10 10-20 0z" fill="#fff" stroke="#777" strokeWidth="1.500" /><circle cx="11" cy="11" r="5" fill="#41658f" /><path d="M14 16h10l-5 6z" fill="#222" /></>,
  <path d="M1 2h22v4l-8 7v10l-6-3v-7L1 6z" fill="#4b79ad" />,
];

const Checker = ({ dark }) => (
  <svg width="16" height="15" viewBox="0 0 16 15" aria-hidden="true">
    <path d="M0 0h16v15H0z" fill={dark ? "#265a8c" : "#c2d6ec"} />
    <path d={dark ? "M5 0h6v5H5zM0 5h5v5H0zM11 5h5v5h-5zM5 10h6v5H5z" : "M0 0h5v5H0zM11 0h5v5h-5zM5 5h6v5H5zM0 10h5v5H0zM11 10h5v5h-5z"} fill={dark ? "#8cb8e4" : "#26364d"} />
  </svg>
);

function Catchments() {
  const edge = { stroke: "#f0957b", strokeWidth: 3, strokeDasharray: "3 5", strokeLinejoin: "round" };
  return (
    <svg width="711" height="565" viewBox="751 547 711 565" role="img" aria-label="Temperature map">
      <defs>
        <linearGradient id="west" gradientUnits="userSpaceOnUse" x1="600" y1="40" x2="200" y2="1030">
          <stop offset="0" stopColor="#fcc3ab" />
          <stop offset=".1" stopColor="#fde0d4" />
          <stop offset=".25" stopColor="#fff2ec" />
          <stop offset=".42" stopColor="#feeae1" />
          <stop offset=".65" stopColor="#fddccf" />
          <stop offset=".78" stopColor="#fdcbb8" />
          <stop offset=".88" stopColor="#fca58a" />
          <stop offset="1" stopColor="#fcbba4" />
        </linearGradient>
        <linearGradient id="branch" gradientUnits="userSpaceOnUse" x1="90" y1="570" x2="210" y2="690">
          <stop offset="0" stopColor="#fcb499" />
          <stop offset=".6" stopColor="#fdcbb8" />
          <stop offset="1" stopColor="#fddccf" stopOpacity="0" />
        </linearGradient>
        <linearGradient id="mid" gradientUnits="userSpaceOnUse" x1="1045" y1="360" x2="790" y2="450">
          <stop offset="0" stopColor="#fcbfa8" />
          <stop offset=".4" stopColor="#fddbcd" />
          <stop offset="1" stopColor="#fee8df" />
        </linearGradient>
        <linearGradient id="east" gradientUnits="userSpaceOnUse" x1="500" y1="60" x2="150" y2="800">
          <stop offset="0" stopColor="#fee0d5" />
          <stop offset=".4" stopColor="#feeae2" />
          <stop offset=".6" stopColor="#fee5db" />
          <stop offset=".8" stopColor="#fff3ee" />
          <stop offset="1" stopColor="#feddd0" />
        </linearGradient>
      </defs>
      <g transform="translate(840 680) scale(.3333)">
        <path {...edge} fill="url(#west)" d="M557 59L575 55 600 40 614 41 625 60 639 78 629 91 639 102 625 112 590 118 570 127 545 148 515 172 492 199 470 202 456 204 452 222 433 241 433 251 446 270 448 310 450 346 468 352 477 378 474 405 458 428 436 434 420 458 415 478 395 493 370 510 344 524 340 555 328 554 318 570 295 590 272 592 265 608 273 625 248 630 237 655 243 682 240 700 255 720 266 748 276 768 285 800 273 810 260 812 257 845 238 865 218 860 200 864 192 885 190 912 205 928 215 940 232 965 238 990 243 1010 258 1020 272 1022 270 1028 245 1022 230 1031 220 1010 210 990 198 980 190 950 175 935 160 912 154 870 165 834 185 838 198 820 202 795 208 770 202 740 198 710 180 685 150 672 130 662 118 645 108 615 90 595 68 580 78 568 100 562 130 568 152 580 170 600 187 612 196 588 220 564 255 543 280 525 295 490 328 450 340 420 362 390 400 380 420 362 410 320 404 275 390 225 400 195 424 165 440 125 460 104 495 95 515 102 530 112 545 108 562 98z" />
        <path fill="url(#branch)" d="M68 580l32-18 30 6 22 12 18 20 17 12 30 60-19 20-48-20-32-27-10-30z" />
        <path d="M150 616l8 5-6 4zM122 640l10 8 2 10zM451 134l8 2-3 8z" fill="#fff" />
        <path d="M78 562l10 3 14-4M196 932l28-3M120 650l10 18" stroke="#e26a52" strokeWidth="3" fill="none" />
        <path {...edge} fill="url(#mid)" d="M1032 352L1045 368 1030 388 998 412 970 404 938 406 915 406 890 428 850 446 822 458 812 480 806 510 802 530 778 530 780 500 793 470 792 448 778 432 800 420 815 430 850 425 880 405 905 382 930 374 970 380 1000 376z" />
        <path {...edge} fill="#fdd3c3" d="M780 530H800L804 560 822 580 832 608 828 635 816 632 818 605 800 580 782 570 765 590 745 612 722 625 706 637 702 612 690 595 694 550 688 525 666 526 684 515 682 495 698 490 700 458 718 444 720 462 704 490 708 520 708 575 728 600 750 590 765 562z" />
        <path d="M642 502l12-10 9 6-2 12-8 4z" fill="#fdc5b0" stroke="#f3a58c" />
        <path d="M780 529h18" stroke="#d8403a" strokeWidth="4" />
      </g>
      <g transform="translate(1140 680) scale(.3333)">
        <path {...edge} fill="url(#east)" d="M535 58L528 80 535 95 520 112 525 125 505 130 490 135 470 150 482 165 478 178 452 176 466 160 445 170 432 176 440 195 436 225 426 250 412 266 408 275 428 285 432 312 414 335 408 355 390 375 388 402 402 420 400 450 412 490 412 530 432 555 430 610 455 625 465 655 495 660 515 680 530 710 548 750 538 755 520 735 515 705 495 685 460 680 430 650 405 610 395 575 380 520 366 510 366 470 360 448 345 465 320 485 300 510 285 535 250 545 215 552 190 572 188 620 192 665 195 708 175 738 130 738 120 760 95 800 78 812 82 832 62 832 62 800 78 770 95 760 125 730 165 705 178 680 175 660 160 630 155 550 185 525 220 502 260 505 258 488 285 474 315 462 322 445 316 400 322 350 340 345 352 318 380 275 380 180 398 140 420 128 422 108 470 100 472 85 500 60z" />
        <path d="M500 62l20-5 35 1M396 142l8-4M212 504l20-2M462 658h6" stroke="#dd4a3c" strokeWidth="3" fill="none" />
      </g>
    </svg>
  );
}

function MainWindow() {
  return (
    <AppWindow aria-label="QGIS">
      <Caption>
        <PlainButton aria-label="Minimize"><svg width="11" height="11" stroke="#111"><path d="M0 5.500h11" /></svg></PlainButton>
        <PlainButton aria-label="Maximize"><svg width="11" height="11" stroke="#111" fill="none"><path d="M.5.5h10v10H.5z" /></svg></PlainButton>
        <PlainButton aria-label="Close"><Close size={11} /></PlainButton>
      </Caption>
      <MenuBar>
        {menus.map(([a, b, c]) => (
          <a href="#" key={a + b + c}>{a}{b && <u>{b}</u>}{c}</a>
        ))}
      </MenuBar>
      <ToolBar $pl={464}>
        <T name="lock" off />
        <T name="newProject" />
        <T name="newBookmark" />
        <T name="bookmarks" />
        <T name="refresh" />
        <Dots w={15} />
        <T name="identify" />
        <T name="action" off />
        <Drop faded />
        <T name="select" off />
        <Drop faded />
        <T name="form" off />
        <Drop faded />
        <T name="deselect" />
        <T name="table" off />
        <T name="abacus" off />
        <T name="gear" />
        <T name="sigma" />
        <T name="measure" />
        <Drop />
        <T name="tip" />
        <Fill />
        <More $w={20} aria-label="More tools">»</More>
      </ToolBar>
      <ToolBar $pl={483}>
        <T name="paste" off />
        <T name="undo" off />
        <T name="redo" off />
        <Dots w={16} />
        <LabelTag fg="#555" line="#999" bg="#d8d8c8" faded />
        <T name="diagram" off />
        <Slot $w={8}><Rule /></Slot>
        <LabelTag text="ab" fg="#222" line="#3c86d0" bg="#b9d7f5" dot="#a81a1a" />
        <LabelTag fg="#e01414" line="#f02020" bg="#ffd0d0" />
        <Slot $w={8}><Rule /></Slot>
        <LabelTag text="ab" fg="#555" line="#999" bg="#d8d8c8" dot="#999" faded />
        <LabelTag fg="#555" line="#999" bg="#d8d8c8" dot="#bbb" faded />
        <More $w={32} aria-label="More label tools">»</More>
        <Dots w={8} />
        <T name="database" />
        <Dots w={16} />
        <T name="globe" />
        <More $w={16} aria-label="More web tools">»</More>
        <Dots w={14} />
        <T name="python" />
        <More $w={14} aria-label="More plugins">»</More>
        <Dots w={16} />
        <T name="help" />
        <Dots w={16} />
      </ToolBar>
      <ToolBar $pl={487} $h={35}>
        <T name="zoomRoi" w={26} />
        <Roi><input type="radio" name="roi" />ROI</Roi>
        <T name="roiShape" w={22} />
        <Gap $w={7} />
        <T name="roiPlus" w={22} />
        <Gap $w={7} />
        <T name="roiRedo" w={22} />
        <Gap $w={3} />
        <Tag $w={26} htmlFor="dist">Dist</Tag>
        <Spin id="dist" value="0,010000" $w={88} />
        <Tag $w={23} htmlFor="tmin">Min</Tag>
        <Spin id="tmin" value="60" $w={53} />
        <Tag $w={27} htmlFor="tmax">Max</Tag>
        <Spin id="tmax" value="100" $w={53} />
        <Fill />
        <More $w={16} aria-label="More SCP tools">»</More>
        <Dots w={17} />
        <T name="raster" />
        <More $w={14} aria-label="More raster tools">»</More>
        <Gap $w={3} />
      </ToolBar>
      <Body>
        <SideTools>
          <Tool aria-label="New layer">
            <Icon size={26}><path d="M2 10l10-6v16z" fill="#d8a80e" stroke="#8f6e05" /><path d="M12 8h10v12H12z" fill="#c9a40c" /><path d="M17 11v8M13 15h8M14.500 12.500l5 5M19.500 12.500l-5 5" stroke="#fff8c8" strokeWidth="1.300" /></Icon>
          </Tool>
        </SideTools>
        <LayerPanel>
          <LayerTools>
            {layerIcons.map((icon, i) => (
              <Tool key={i} $w={22} aria-label="Layer tool"><Icon size={15}>{icon}</Icon></Tool>
            ))}
            <Tool $w={23} $off aria-label="Filter by expression"><Icon size={15}><path d="M12 5c-5-3-10 0-5 4-6 3-3 9 4 6M14 20v-4q3-3 6 0v4" stroke="#444" strokeWidth="2" /></Icon></Tool>
            <Drop faded />
            <Tool $w={22} aria-label="Expand all"><Icon size={15}><path d="M1 3h12M5 3v17h7" stroke="#777" strokeWidth="2" /><path d="M3 7h6v4H3zM3 15h6v4H3z" fill="#eba54a" /><path d="M13 2h6v11h4l-7 8-7-8h4z" fill="#3f72ac" /></Icon></Tool>
            <Tool $w={22} aria-label="Collapse all"><Icon size={15}><path d="M1 3h12M5 3v17h7" stroke="#777" strokeWidth="2" /><path d="M3 7h6v4H3zM3 15h6v4H3z" fill="#eba54a" /><path d="M13 22h6V11h4l-7-8-7 8h4z" fill="#3f72ac" /></Icon></Tool>
            <Tool $w={22} aria-label="Remove layer"><Icon size={15}><path d="M2 2h17v18H2z" fill="#fff" stroke="#777" strokeWidth="1.800" /><path d="M13 17h10v5H13z" fill="#e04848" /></Icon></Tool>
          </LayerTools>
          <Tree>
            <TreeRows>
              <LayerRow $active>
                <Triangle size={9} color="#063a6b" />
                <CheckBox type="checkbox" id="temp" defaultChecked $w={15} $h={15} />
                <Checker dark />
                <label htmlFor="temp">Temperature_distribution</label>
              </LayerRow>
              {classes.map(([label, color]) => (
                <ClassRow key={label} $c={color}>{label}</ClassRow>
              ))}
              <LayerRow>
                <Triangle size={9} />
                <CheckBox type="checkbox" id="cover" $w={15} $h={15} />
                <Checker />
                <label htmlFor="cover">Land_Cover</label>
              </LayerRow>
            </TreeRows>
            <ScrollBar w={15} h={15} size={9} thumb={170} rest={30} />
          </Tree>
        </LayerPanel>
        <MapView><Catchments /></MapView>
      </Body>
      <StatusBar>
        <Locate><Magnifier size={12} /><input type="text" aria-label="Locate" placeholder="Type to locate (Ctrl+K)" /></Locate>
        <Clip $w={45} $left={40} htmlFor="coord">Coordinate</Clip>
        <StatusInput id="coord" defaultValue="491472,5050242" />
        <Gap $w={3} />
        <Icon size={18}><path d="M5 3l5 3-4 4zM10 6l4 6-5 3-4-6zM4 13l5 2" stroke="#222" strokeWidth="2.500" /><circle cx="14" cy="16" r="5.500" fill="#fff" stroke="#222" strokeWidth="2" /><path d="M14 12v4l3 2M14 8l7-7M17 9l4-1" stroke="#222" strokeWidth="2" /></Icon>
        <Clip $w={19} $left={10} htmlFor="scale">Scale</Clip>
        <Gap $w={3} />
        <Select id="scale" value="1:634390" size={9} $w={81} $h={21} $pad={3} $arrow={7} />
        <Gap $w={9} />
        <Icon size={19}><path d="M6 11V7a6 6 0 0112 0v4" stroke="#999" strokeWidth="2" /><rect x="4" y="10" width="16" height="12" rx="1.500" fill="#555" /></Icon>
        <Clip $w={37} $left={4} htmlFor="mag">Magnifier</Clip>
        <Gap $w={4} />
        <Spin id="mag" value="100%" $w={80} />
        <Clip $w={34} $left={7} htmlFor="rot">Rotation</Clip>
        <Gap $w={7} />
        <Spin id="rot" value="0,0 °" $w={78} />
        <Gap $w={6} />
        <CheckBox type="checkbox" id="render-map" defaultChecked $w={14} $h={15} />
        <Gap $w={5} />
        <label htmlFor="render-map">Render</label>
        <Fill />
        <Icon size={17}><circle cx="12" cy="12" r="10.500" fill="#777" /><path d="M12 1v22M1 12h22M3 7h18M3 17h18M12 1c-7 6-7 16 0 22M12 1c7 6 7 16 0 22" stroke="#ddd" /></Icon>
        <Gap $w={3} />
        <span>EPSG:32632</span>
        <Gap $w={18} />
        <PlainButton aria-label="Messages"><Icon size={19}><path d="M12 1c14 0 14 17 5 18l-1 4-5-4C-3 19-3 1 12 1z" fill="#555" /><path d="M6 10h3M11 10h3M16 10h3" stroke="#fff" strokeWidth="3" /></Icon></PlainButton>
        <Gap $w={22} />
      </StatusBar>
    </AppWindow>
  );
}

export default function App() {
  return (
    <>
      <Global />
      <Desktop>
        <MainWindow />
        <LayerProperties />
      </Desktop>
    </>
  );
}
